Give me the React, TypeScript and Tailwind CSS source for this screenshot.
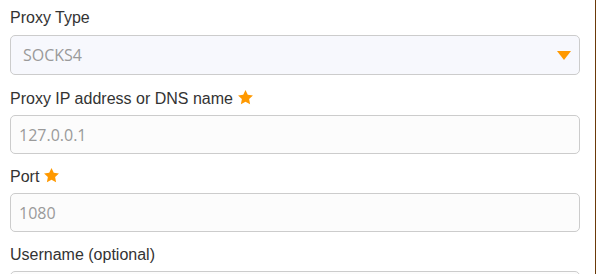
const Star = () => (
  <svg viewBox="0 0 24 24" className="ml-[4px] inline-block h-[17px] w-[17px] align-[-2px]" fill="#ff9900">
    <path d="M12 1.5l3.2 6.7 7.3.9-5.4 5.1 1.4 7.3L12 18l-6.5 3.5 1.4-7.3-5.4-5.1 7.3-.9z" />
  </svg>
);

const fields = [
  { label: "Proxy IP address or DNS name", placeholder: "127.0.0.1", required: true },
  { label: "Port", placeholder: "1080", required: true },
  { label: "Username (optional)", placeholder: "", required: false },
];

export default function App() {
  return (
    <div className="flex h-[274px] w-[597px] overflow-hidden bg-white font-['Liberation_Sans',Arial,sans-serif] text-[16px] text-[#333]">
      <div className="flex w-[595px] flex-col px-[10px] pr-[15px] pt-[8px]">
        <div className="mb-[14px]">
          <label className="mb-[7px] block leading-[20px]">Proxy Type</label>
          <div className="relative flex h-[40px] items-center rounded-[5px] border border-[#cccccc] bg-[#f7f8fd] px-[12px] font-['Open_Sans',sans-serif] text-[16px] text-[#9a9a9a]">
            SOCKS4
            <svg className="absolute right-[8px] top-[15px]" width="14" height="9" viewBox="0 0 14 9">
              <path d="M0 0h14L7 9z" fill="#ff9900" />
            </svg>
          </div>
        </div>
        {fields.map((f) => (
          <div key={f.label} className="mb-[13px]">
            <label className="mb-[6px] block leading-[20px]">
              {f.label}
              {f.required && <Star />}
            </label>
            <div className="flex h-[39px] items-center rounded-[5px] border border-[#cccccc] bg-[#fcfcfc] px-[8px] font-['Open_Sans',sans-serif] text-[16px] text-[#9a9a9a]">
              {f.placeholder}
            </div>
          </div>
        ))}
      </div>
      <div className="w-[1px] bg-[#6b3a0a]" />
    </div>
  );
}
